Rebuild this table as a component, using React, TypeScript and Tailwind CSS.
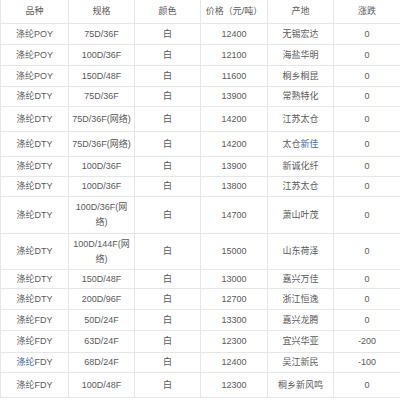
import React from "react";

type Row = {
  kind: React.ReactNode;
  spec: string[];
  price: string;
  origin: React.ReactNode;
  change: string;
  h: string;
};

const blue = "text-[#3a6a9c]";

const rows: Row[] = [
  { kind: "涤纶POY", spec: ["75D/36F"], price: "12400", origin: "无锡宏达", change: "0", h: "h-[21px]" },
  { kind: "涤纶POY", spec: ["100D/36F"], price: "12100", origin: "海盐华明", change: "0", h: "h-[21px]" },
  { kind: "涤纶POY", spec: ["150D/48F"], price: "11600", origin: "桐乡桐昆", change: "0", h: "h-[21px]" },
  { kind: "涤纶DTY", spec: ["75D/36F"], price: "13900", origin: "常熟特化", change: "0", h: "h-[20px]" },
  { kind: "涤纶DTY", spec: ["75D/36F(网络)"], price: "14200", origin: "江苏太仓", change: "0", h: "h-[25px]" },
  {
    kind: "涤纶DTY",
    spec: ["75D/36F(网络)"],
    price: "14200",
    origin: (
      <>
        太仓<span className={blue}>新佳</span>
      </>
    ),
    change: "0",
    h: "h-[25px]",
  },
  { kind: "涤纶DTY", spec: ["100D/36F"], price: "13900", origin: "新诚化纤", change: "0", h: "h-[20px]" },
  { kind: "涤纶DTY", spec: ["100D/36F"], price: "13800", origin: "江苏太仓", change: "0", h: "h-[20px]" },
  { kind: "涤纶DTY", spec: ["100D/36F(网", "络)"], price: "14700", origin: "萧山叶茂", change: "0", h: "h-[37px]" },
  { kind: "涤纶DTY", spec: ["100D/144F(网", "络)"], price: "15000", origin: "山东荷泽", change: "0", h: "h-[36px]" },
  { kind: "涤纶DTY", spec: ["150D/48F"], price: "13000", origin: "嘉兴万佳", change: "0", h: "h-[19px]" },
  { kind: "涤纶DTY", spec: ["200D/96F"], price: "12700", origin: "浙江恒逸", change: "0", h: "h-[21px]" },
  { kind: "涤纶FDY", spec: ["50D/24F"], price: "13300", origin: "嘉兴龙腾", change: "0", h: "h-[21px]" },
  { kind: "涤纶FDY", spec: ["63D/24F"], price: "12300", origin: "宜兴华亚", change: "-200", h: "h-[22px]" },
  {
    kind: (
      <>
        <span className={blue}>涤纶</span>FDY
      </>
    ),
    spec: ["68D/24F"],
    price: "12400",
    origin: "吴江新民",
    change: "-100",
    h: "h-[20px]",
  },
  { kind: "涤纶FDY", spec: ["100D/48F"], price: "12300", origin: "桐乡新风鸣", change: "0", h: "h-[25px]" },
];

const cols = "grid grid-cols-[68px_66px_66px_67px_66px_67px] border-l border-[#e6e6e6]";
const cell =
  "flex items-center justify-center border-r border-b border-[#e6e6e6] text-center whitespace-nowrap";

export default function App() {
  return (
    <div className="w-[400px] h-[400px] overflow-hidden bg-white text-[9px] leading-[15px] text-[#5a5a5a] font-['Liberation_Sans','Noto_Sans_CJK_SC',sans-serif]">
      <div className={`${cols} h-[24px]`}>
        <div className={cell}>品种</div>
        <div className={cell}>规格</div>
        <div className={cell}>颜色</div>
        <div className={cell}>价格（元/吨）</div>
        <div className={cell}>产地</div>
        <div className={cell}>涨跌</div>
      </div>
      {rows.map((r, i) => (
        <div key={i} className={`${cols} ${r.h}`}>
          <div className={cell}>
            <span>{r.kind}</span>
          </div>
          <div className={cell}>
            <div className="flex flex-col items-center">
              {r.spec.map((s, j) => (
                <span key={j}>{s}</span>
              ))}
            </div>
          </div>
          <div className={cell}>白</div>
          <div className={cell}>{r.price}</div>
          <div className={cell}>
            <span>{r.origin}</span>
          </div>
          <div className={cell}>{r.change}</div>
        </div>
      ))}
    </div>
  );
}
